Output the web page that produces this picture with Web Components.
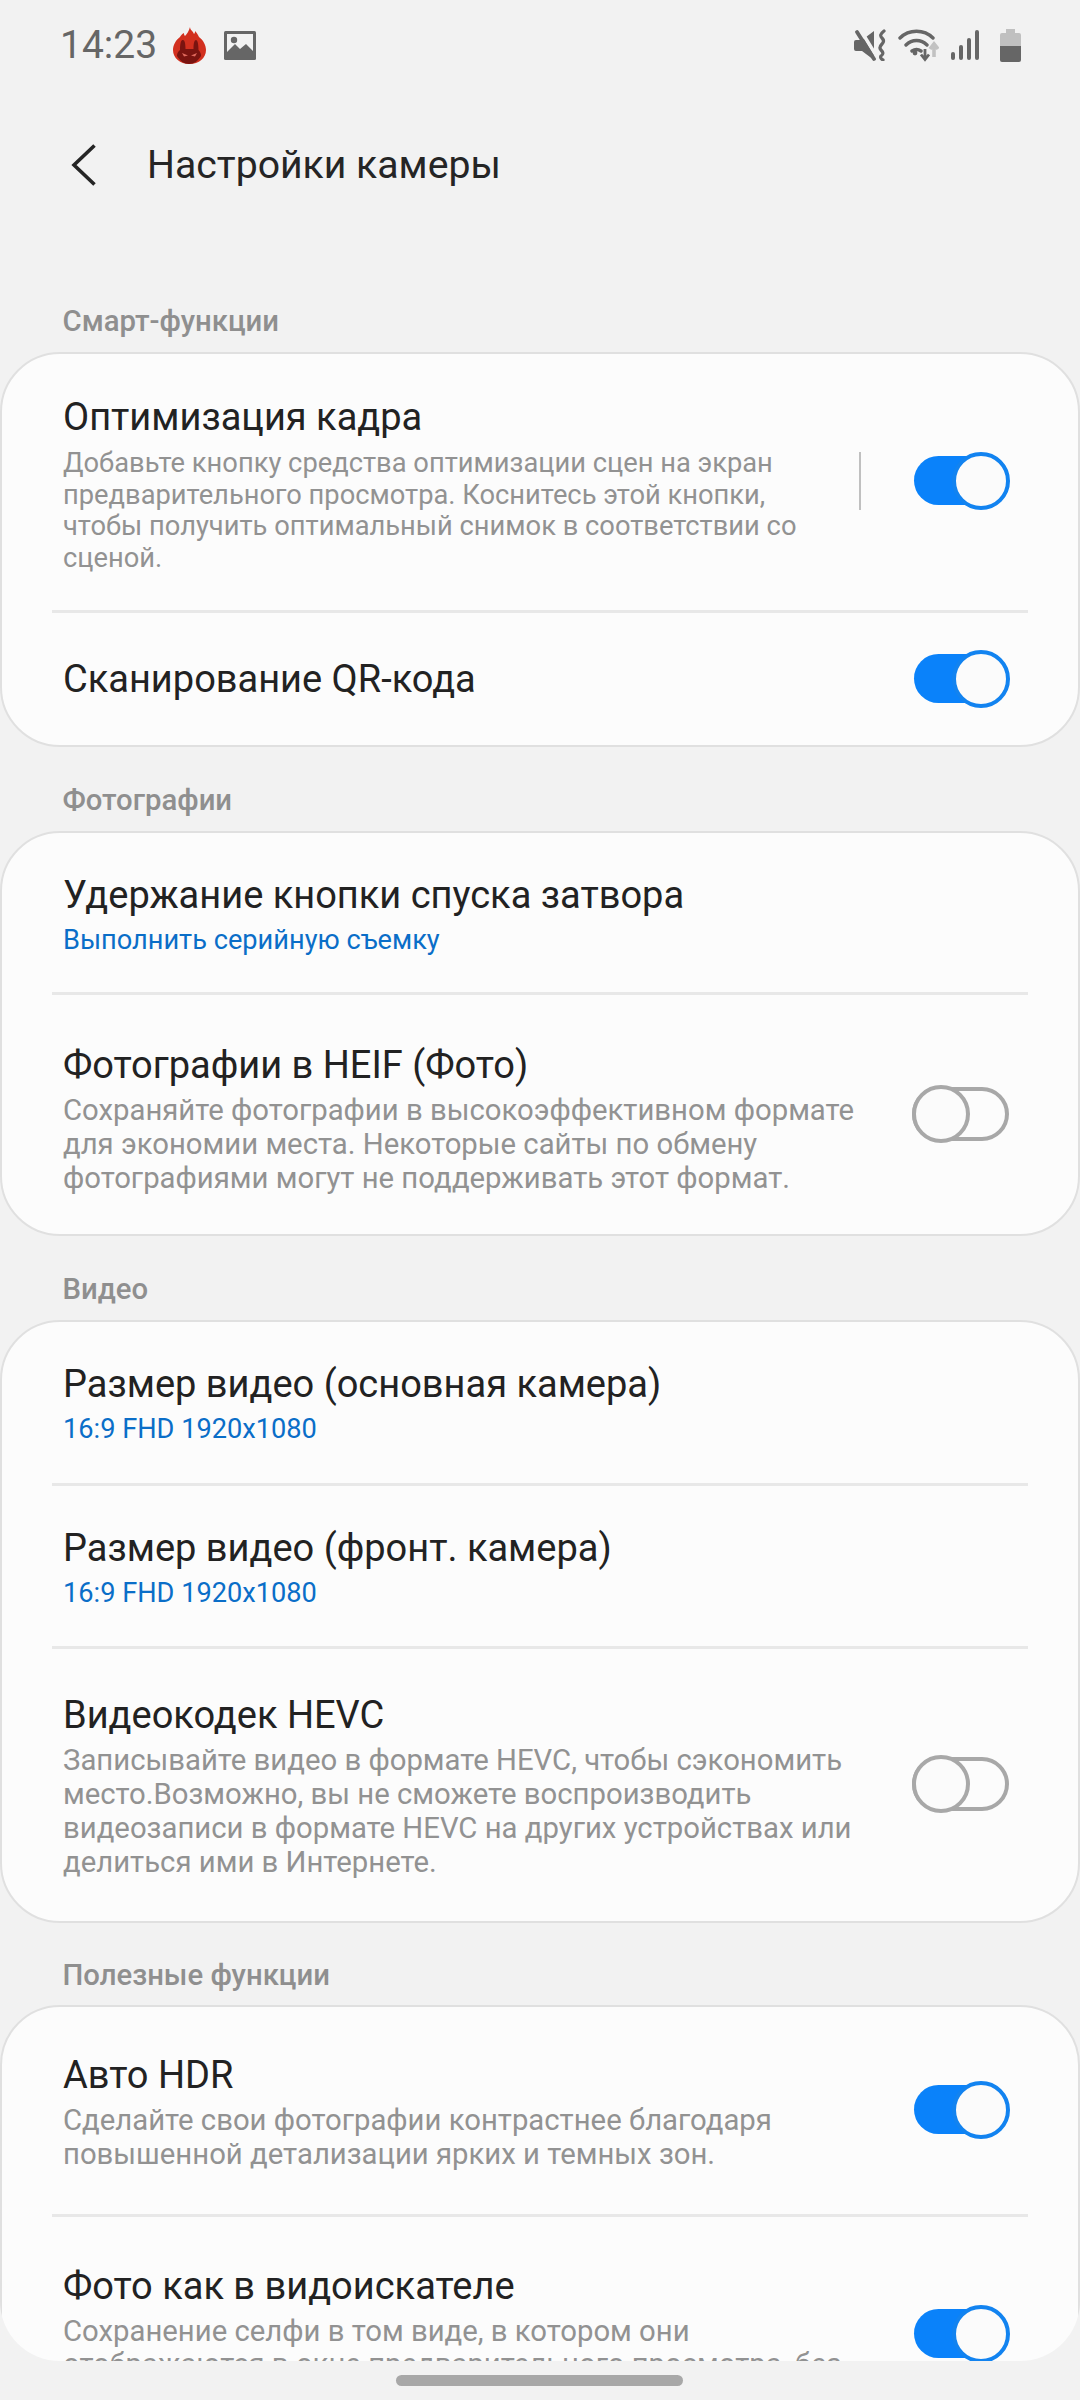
<!DOCTYPE html>
<html lang="ru">
<head>
<meta charset="utf-8">
<title>Настройки камеры</title>
<style>
  html, body { margin: 0; height: 2400px; overflow: hidden; background: #f2f2f2; }
  body { display: flex; flex-direction: column; font-family: Roboto, "Noto Sans", sans-serif; }
</style>
</head>
<body>
<scroll-view>
  <status-bar></status-bar>
  <app-bar>Настройки камеры</app-bar>

  <settings-group label="Смарт-функции">
    <setting-row title="Оптимизация кадра" style="--pt:39px;--pb:35px;--gap:7px;--sub:27.3px;--lh:31.7px">
      Добавьте кнопку средства оптимизации сцен на экран<br>предварительного просмотра. Коснитесь этой кнопки,<br>чтобы получить оптимальный снимок в соответствии со<br>сценой.
      <toggle-switch slot="end" on split style="margin-bottom:6px"></toggle-switch>
    </setting-row>
    <setting-row title="Сканирование QR-кода" style="--pt:37px;--pb:37px">
      <toggle-switch slot="end" on></toggle-switch>
    </setting-row>
  </settings-group>

  <settings-group label="Фотографии">
    <setting-row title="Удержание кнопки спуска затвора" value="Выполнить серийную съемку" style="--pt:38px;--pb:35px"></setting-row>
    <setting-row title="Фотографии в HEIF (Фото)" style="--pt:46px;--pb:39px">
      Сохраняйте фотографии в высокоэффективном формате<br>для экономии места. Некоторые сайты по обмену<br>фотографиями могут не поддерживать этот формат.
      <toggle-switch slot="end" style="margin-bottom:9px"></toggle-switch>
    </setting-row>
  </settings-group>

  <settings-group label="Видео">
    <setting-row title="Размер видео (основная камера)" value="16:9 FHD 1920x1080" style="--pt:38px;--pb:36px"></setting-row>
    <setting-row title="Размер видео (фронт. камера)" value="16:9 FHD 1920x1080" style="--pt:38px;--pb:36px"></setting-row>
    <setting-row title="Видеокодек HEVC" style="--pt:42px;--pb:42px">
      Записывайте видео в формате HEVC, чтобы сэкономить<br>место.Возможно, вы не сможете воспроизводить<br>видеозаписи в формате HEVC на других устройствах или<br>делиться ими в Интернете.
      <toggle-switch slot="end" style="margin-bottom:3px"></toggle-switch>
    </setting-row>
  </settings-group>

  <settings-group label="Полезные функции" style="--lt:34px;--lb:12px">
    <setting-row title="Авто HDR" style="--pt:44px;--pb:42px">
      Сделайте свои фотографии контрастнее благодаря<br>повышенной детализации ярких и темных зон.
      <toggle-switch slot="end" on style="margin-bottom:2px"></toggle-switch>
    </setting-row>
    <setting-row title="Фото как в видоискателе" style="--pt:45px;--pb:70px">
      Сохранение селфи в том виде, в котором они<br>отображаются в окне предварительного просмотра, без
      <toggle-switch slot="end" on style="margin-top:24px"></toggle-switch>
    </setting-row>
  </settings-group>
</scroll-view>
<nav-pill></nav-pill>

<script>
// small helper: every element gets an open shadow root with its markup
function define(name, html, extra) {
  const tpl = document.createElement('template');
  tpl.innerHTML = html;
  class El extends HTMLElement {
    constructor() {
      super();
      this.attachShadow({ mode: 'open' });
      this.shadowRoot.appendChild(tpl.content.cloneNode(true));
    }
    connectedCallback() { if (extra) extra(this, this.shadowRoot); }
  }
  customElements.define(name, El);
}

// scrolling area, cut off with rounded corners above the nav pill
define('scroll-view', `
<style>
  :host { display: block; height: 2361px; overflow: hidden; border-radius: 0 0 60px 60px; }
</style>
<slot></slot>`);

define('status-bar', `
<style>
  :host { display: flex; align-items: center; height: 90px; padding: 0 59px 0 60px; box-sizing: border-box; color: #666; }
  .time { font-size: 39px; line-height: 46px; margin-right: 16px; }
  svg { display: block; flex: none; }
  .left { display: flex; align-items: center; gap: 18px; }
  .right { margin-left: auto; display: flex; align-items: center; gap: 12px; }
  .signal { margin-right: 9px; }
</style>
<span class="time">14:23</span>
<div class="left">
  <svg width="33" height="37" viewBox="0 0 33 37">
    <path d="M17 0c0 3 3 4 4 7 1-1 1-2 1-3 2 2 3 4 4 6 4 3 7 8 7 13 0 8-7 14-16.5 14S0 31 0 23c0-5 3-10 7-13 1-2 2-3 4-4 0 1 0 2 1 3 2-2 4-5 5-9z" fill="#d2301f"/>
    <path d="M10 13c1.500 0 2.500 3 2.500 9h8c0-6 1-9 2.500-9s2.500 4 2.500 10c2 2 2.500 4 2.500 6-3 5-7 8-12 8s-9-3-12-8c0-2 .5-4 3-6 0-6 1-10 2.500-10z" fill="#7a1410"/>
    <path d="M9 26l6 2.500-4 1zM24 26l-6 2.500 4 1z" fill="#e06a5e"/>
  </svg>
  <svg width="32" height="29" viewBox="0 0 32 29">
    <rect width="32" height="29" rx="1.500" fill="#666"/>
    <path d="M3 3h26v17l-7-7-6 5-5-5-8 8z" fill="#f2f2f2"/>
    <circle cx="10" cy="9" r="3.200" fill="#666"/>
  </svg>
</div>
<div class="right">
  <svg width="32" height="32" viewBox="0 0 32 32">
    <path d="M0 13a2 2 0 0 1 2-2h6l12-9v29l-12-9H2a2 2 0 0 1-2-2z" fill="#666"/>
    <path d="M6 0l17 28" stroke="#f2f2f2" stroke-width="3.500"/>
    <path d="M3 3l17 27" stroke="#666" stroke-width="3.800" stroke-linecap="round"/>
    <path d="M30 2c-4 3-4 5-2 7s2 4 0 6-3 4-1 6 3 4 0 6c-1 1 0 3 2 4" fill="none" stroke="#666" stroke-width="3.200" stroke-linecap="round"/>
  </svg>
  <svg width="41" height="33" viewBox="0 0 41 33">
    <path d="M2 9c9-9 24-9 33 0M8 16c6-6 15-6 21 0M14 22c3-2 6-2 9 0" fill="none" stroke="#666" stroke-width="3.400" stroke-linecap="round"/>
    <circle cx="17" cy="24" r="2.400" fill="#666"/>
    <path d="M27 20v9M23 25.500l4 5 4-5" fill="none" stroke="#666" stroke-width="2.800"/>
    <path d="M36 28v-11M32 20l4-5 4 5" fill="none" stroke="#c2c2c2" stroke-width="3.600"/>
  </svg>
  <svg class="signal" width="28" height="30" viewBox="0 0 28 30">
    <g fill="#666"><rect x="0" y="22" width="4" height="8" rx="2"/><rect x="8" y="15" width="4" height="15" rx="2"/><rect x="16" y="8" width="4" height="22" rx="2"/><rect x="24" y="0" width="4" height="30" rx="2"/></g>
  </svg>
  <svg width="21" height="33" viewBox="0 0 21 33">
    <path d="M6 0h9v4h4a2 2 0 0 1 2 2v11H0V6a2 2 0 0 1 2-2h4z" fill="#c0c0c0"/>
    <path d="M0 17h21v14a2 2 0 0 1-2 2H2a2 2 0 0 1-2-2z" fill="#666"/>
  </svg>
</div>`);

define('app-bar', `
<style>
  :host { display: flex; align-items: center; height: 56px; padding: 47px 0 75px 70px; color: #252525; font-size: 39.2px; }
  svg { flex: none; margin-right: 51px; }
</style>
<svg width="26" height="42" viewBox="0 0 26 42"><path d="M24.500 1.500L4 21l20.500 19.500" fill="none" stroke="#252525" stroke-width="3.600"/></svg>
<slot></slot>`);

define('settings-group', `
<style>
  :host { display: block; }
  .label { height: 36px; line-height: 36px; padding: var(--lt, 35px) 0 var(--lb, 13px) 62.5px; font-size: 29.3px; font-weight: 500; color: #8f8f8f; }
  .card { background: #fcfcfc; border: 2px solid #e0e0e0; border-radius: 60px; box-sizing: border-box; overflow: hidden; }
</style>
<div class="label"></div>
<div class="card"><slot></slot></div>`, (el, root) => {
  root.querySelector('.label').textContent = el.getAttribute('label');
});

define('setting-row', `
<style>
  :host { display: block; }
  .row { display: flex; align-items: center; padding: var(--pt, 40px) 68px var(--pb, 40px) 61px; }
  .text { flex: 1; min-width: 0; }
  .title { font-size: 38px; line-height: 48px; color: #222; }
  .sub { margin-top: var(--gap, 5px); font-size: var(--sub, 29.3px); line-height: var(--lh, 33.7px); color: #929292; }
  .value { margin-top: 5px; font-size: 27.2px; line-height: 33.5px; color: #0a6ec8; }
  .value:empty { display: none; }
  .line { display: none; height: 3px; margin: 0 50px; background: #e8e8e8; }
  :host(:not(:last-child)) .line { display: block; }
</style>
<div class="row">
  <div class="text">
    <div class="title"></div>
    <div class="value"></div>
    <div class="sub"><slot></slot></div>
  </div>
  <slot name="end"></slot>
</div>
<div class="line"></div>`, (el, root) => {
  root.querySelector('.title').textContent = el.getAttribute('title');
  root.querySelector('.value').textContent = el.getAttribute('value') || '';
  if (!el.textContent.trim()) root.querySelector('.sub').style.display = 'none';
  el.removeAttribute('title');
});

define('toggle-switch', `
<style>
  :host { display: flex; align-items: center; flex: none; }
  .split { display: none; width: 2px; height: 58px; background: #c0c0c0; margin-right: 51px; }
  :host([split]) .split { display: block; }
  .sw { position: relative; width: 98px; height: 58px; }
  .track { position: absolute; left: 0; right: 1px; top: 2px; bottom: 2px; border: 4px solid #a8a8a8; border-radius: 27px; box-sizing: border-box; }
  .knob { position: absolute; left: 0; top: 0; width: 58px; height: 58px; border: 4px solid #a8a8a8; border-radius: 50%; background: #fbfbfb; box-sizing: border-box; }
  :host([on]) .track { left: 2px; right: 2px; top: 4px; bottom: 5px; background: #0a82fa; border: 0; border-radius: 25px; }
  :host([on]) .knob { left: 40px; border-color: #1283f0; }
</style>
<div class="split"></div>
<div class="sw"><div class="track"></div><div class="knob"></div></div>`);

define('nav-pill', `
<style>
  :host { display: block; padding-top: 14px; }
  div { width: 287px; height: 11px; margin-left: 396px; background: #a8a8a8; border-radius: 6px; }
</style>
<div></div>`);
</script>
</body>
</html>
